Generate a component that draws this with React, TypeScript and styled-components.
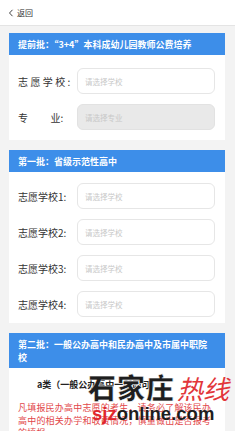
import React from 'react';
import styled, { createGlobalStyle } from 'styled-components';

const GlobalStyle = createGlobalStyle`
  html, body {
    margin: 0;
    padding: 0;
    background: #f3f3f3;
    font-family: "Noto Sans CJK SC", "Noto Sans", sans-serif;
    overflow: hidden;
  }
`;

const Page = styled.div`
  position: relative;
  width: 235px;
  min-height: 431px;
  background: #f3f3f3;
`;

const TopBar = styled.div`
  height: 25px;
  background: #fff;
  border-bottom: 1px solid #e4e4e4;
  display: flex;
  align-items: center;
  padding-left: 8px;
  gap: 3px;
  font-size: 8px;
  color: #333;
`;

const Main = styled.div`
  padding: 7px 10px 0 9px;
  display: flex;
  flex-direction: column;
  gap: 10px;
`;

const Section = styled.section`
  display: flex;
  flex-direction: column;
`;

const SectionHeader = styled.div`
  background: #3d8ee9;
  color: #fff;
  font-size: 9px;
  font-weight: 700;
  line-height: 13px;
  padding: 5px 16px 4px 9px;
  min-height: 13px;
`;

const Card = styled.div<{ $pt?: number; $pb?: number }>`
  background: #fff;
  padding: ${p => p.$pt ?? 12}px 10px ${p => p.$pb ?? 10}px 9px;
  display: flex;
  flex-direction: column;
  gap: 10px;
`;

const Row = styled.div`
  display: flex;
  align-items: center;
  height: 26px;
`;

const Label = styled.div<{ $spread?: boolean }>`
  width: 59px;
  flex-shrink: 0;
  font-size: 10px;
  color: #333;
  letter-spacing: ${p => (p.$spread ? '2.4px' : '0')};
  white-space: pre;
`;

const Input = styled.div<{ $disabled?: boolean }>`
  flex: 1;
  height: 24px;
  border: 1px solid ${p => (p.$disabled ? '#e2e2e2' : '#e6e6e6')};
  border-radius: 6px;
  background: ${p => (p.$disabled ? '#e9e9e9' : '#fff')};
  display: flex;
  align-items: center;
  padding-left: 7px;
  font-size: 7.5px;
  color: #c8c8c8;
`;

const SubTitle = styled.div`
  padding-left: 19px;
  font-size: 9px;
  font-weight: 700;
  color: #222;
  line-height: 14px;
`;

const Notice = styled.div`
  font-size: 9px;
  line-height: 12.5px;
  color: #e2474a;
  width: 196px;
  letter-spacing: 0.2px;
`;

const Watermark = styled.div`
  position: absolute;
  left: 88px;
  top: 369px;
  display: flex;
  flex-direction: column;
  pointer-events: none;
`;

const MarkTop = styled.div`
  display: flex;
  align-items: center;
  height: 36px;
`;

const MarkCity = styled.span`
  font-size: 28px;
  font-weight: 900;
  color: #1e1e1e;
  letter-spacing: 1px;
  -webkit-text-stroke: 0.5px #fff;
`;

const MarkHot = styled.span`
  font-family: "Noto Sans CJK SC", serif;
  font-size: 26px;
  font-weight: 400;
  color: #e2363a;
  margin-left: 2px;
  font-style: italic;
`;

const MarkUrl = styled.div`
  font-family: "Liberation Sans", Arial, sans-serif;
  font-size: 18.5px;
  font-weight: 700;
  color: #1e1e1e;
  margin-left: 4px;
  margin-top: -2px;
  line-height: 22px;
  span {
    color: #e0262c;
  }
`;

const Chevron = () => (
  <svg width="6" height="8" viewBox="0 0 6 8">
    <path d="M4.5 0.8 L1.5 4 L4.5 7.2" fill="none" stroke="#444" strokeWidth="1" />
  </svg>
);

export default function App() {
  return (
    <Page>
      <GlobalStyle />
      <TopBar>
        <Chevron />
        <span>返回</span>
      </TopBar>
      <Main>
        <Section>
          <SectionHeader>提前批：“3+4”本科成幼儿园教师公费培养</SectionHeader>
          <Card $pt={13} $pb={10}>
            <Row>
              <Label $spread>志愿学校:</Label>
              <Input>请选择学校</Input>
            </Row>
            <Row>
              <Label>{'专          业:'}</Label>
              <Input $disabled>请选择专业</Input>
            </Row>
          </Card>
        </Section>
        <Section>
          <SectionHeader>第一批：省级示范性高中</SectionHeader>
          <Card $pt={11} $pb={6}>
            {[1, 2, 3, 4].map(n => (
              <Row key={n}>
                <Label>志愿学校{n}:</Label>
                <Input>请选择学校</Input>
              </Row>
            ))}
          </Card>
        </Section>
        <Section>
          <SectionHeader>第二批：一般公办高中和民办高中及市属中职院校</SectionHeader>
          <Card $pt={10} $pb={10}>
            <SubTitle>a类（一般公办高中一所即可）</SubTitle>
            <Notice>
              凡填报民办高中志愿的考生，请务必了解该民办高中的相关办学和收费情况，慎重做出是否报考的填报
            </Notice>
          </Card>
        </Section>
      </Main>
      <Watermark>
        <MarkTop>
          <MarkCity>石家庄</MarkCity>
          <MarkHot>热线</MarkHot>
        </MarkTop>
        <MarkUrl>
          <span>sjz</span>online.com
        </MarkUrl>
      </Watermark>
    </Page>
  );
}
